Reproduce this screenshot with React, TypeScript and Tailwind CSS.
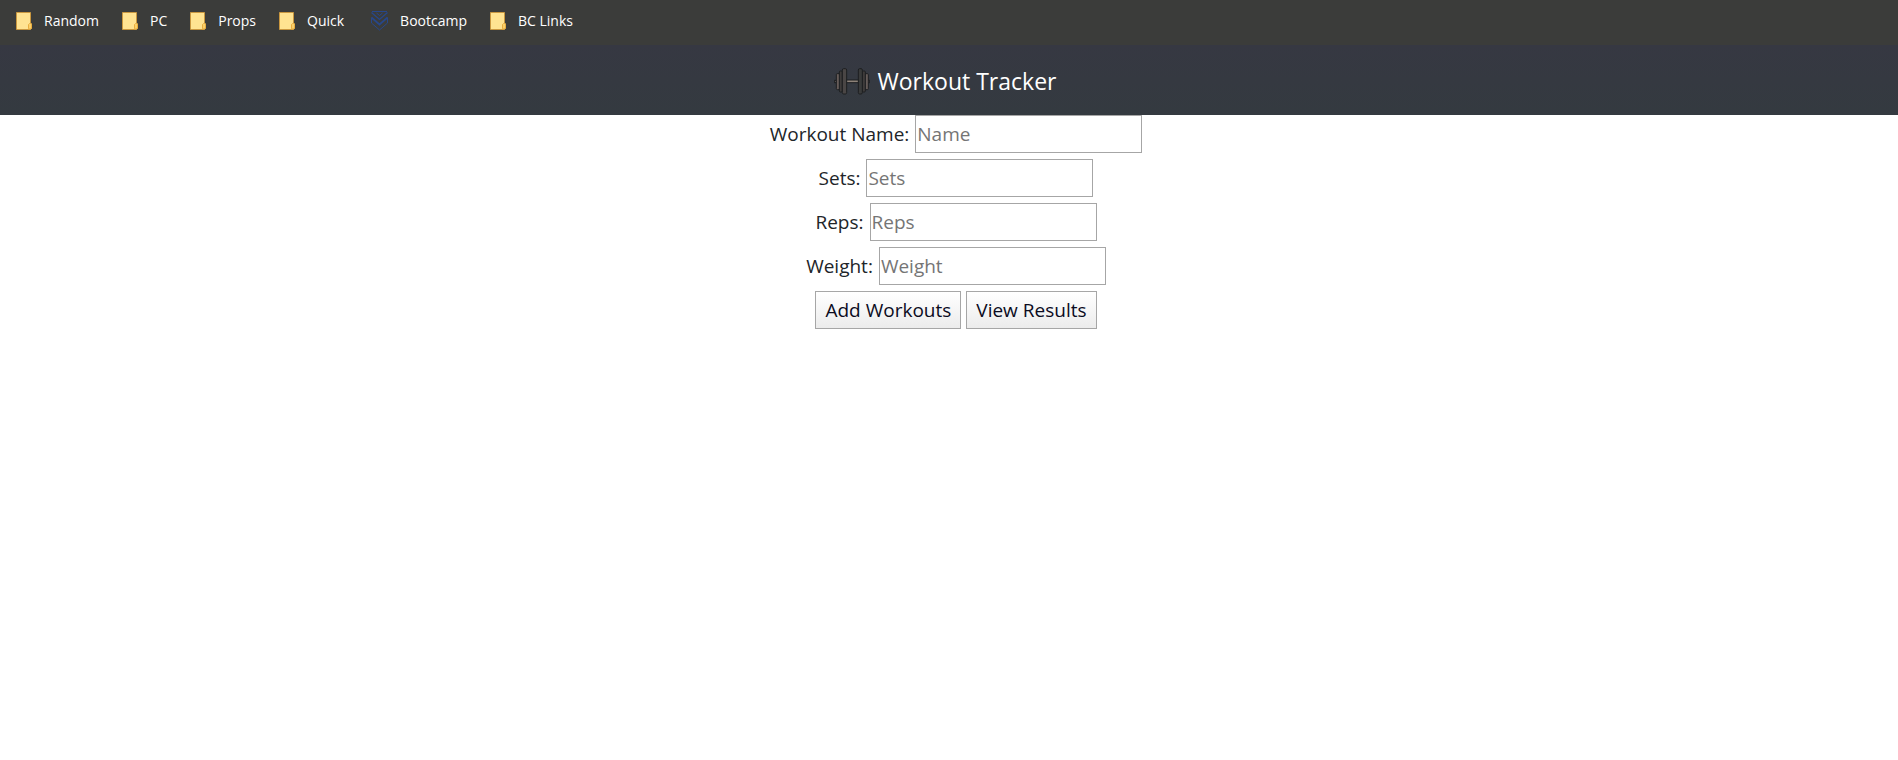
import React from "react";

function FolderIcon() {
  return (
    <svg width="16" height="18" viewBox="0 0 16 18" aria-hidden="true">
      <path d="M0.5 0.5H14.5V11.5H15.5V16.5L14.5 17.5H0.5Z" fill="#ffe391" stroke="#c9973f" />
      <path d="M12.5 16.5V12.5L13.5 11.5H14.5L15.5 12.5V16L14.5 17H12.5Z" fill="#fbd06a" stroke="#e9ae3e" />
    </svg>
  );
}

function ChevronsIcon() {
  return (
    <svg width="21" height="20" viewBox="0 0 21 20" fill="none" stroke="#27478a" aria-hidden="true">
      <path d="M5 0.500H20" />
      <path d="M9.500 2L12.500 4.500L15.500 2" />
      <path d="M4.500 1.500L12.500 8.500L20.500 1.500" strokeWidth="1.300" />
      <path d="M4.500 6.500L12.500 13.500L20.500 6.500" strokeWidth="1.700" />
      <path d="M4.500 6.500V12L12.500 19L20.500 12V6.500" />
    </svg>
  );
}

function DumbbellIcon() {
  return (
    <svg width="36" height="27" viewBox="0 0 108 81" stroke="#1d1f21" strokeWidth="3" aria-hidden="true">
      <rect x="2" y="37" width="6" height="7" fill="#6b625f" />
      <rect x="36" y="36" width="38" height="8" fill="#8d8279" />
      <rect x="7" y="17" width="11" height="48" rx="3" fill="#665c59" />
      <rect x="16" y="9" width="9" height="63" rx="3" fill="#3f3c3b" />
      <rect x="25" y="2" width="13" height="76" rx="4" fill="#4a4645" />
      <rect x="101" y="37" width="5" height="7" fill="#6b625f" />
      <rect x="93" y="17" width="10" height="48" rx="3" fill="#665c59" />
      <rect x="85" y="9" width="9" height="63" rx="3" fill="#3f3c3b" />
      <rect x="73" y="2" width="12" height="76" rx="4" fill="#3a3b3b" />
    </svg>
  );
}

const bookmarks = ["Random", "PC", "Props", "Quick", "Bootcamp", "BC Links"];

const fields = [
  { id: "name", label: "Workout Name:", placeholder: "Name" },
  { id: "sets", label: "Sets:", placeholder: "Sets" },
  { id: "reps", label: "Reps:", placeholder: "Reps" },
  { id: "weight", label: "Weight:", placeholder: "Weight" },
];

const buttonClass =
  "h-[38px] border border-[#a6a6a6] bg-linear-to-b from-white to-[#ececec] px-[9px] text-[19px] text-[#0b0b1e]";

export default function App() {
  return (
    <div className="min-h-screen bg-white font-['Open_Sans',sans-serif] text-[#212529]">
      <nav aria-label="Bookmarks" className="flex h-[45px] items-start gap-[23px] bg-[#3b3c3a] px-4 pt-[11px]">
        {bookmarks.map((name) => (
          <a key={name} href="#" className="flex h-5 items-center gap-3 text-[14px] text-white">
            {name === "Bootcamp" ? <ChevronsIcon /> : <FolderIcon />}
            <span className="pb-0.5">{name}</span>
          </a>
        ))}
      </nav>
      <header className="flex h-[70px] items-center justify-center gap-2 bg-[#343a40] bg-linear-to-b from-[#363842] to-[#343a40] pt-0.5 pr-2">
        <DumbbellIcon />
        <h1 className="text-[23px] text-white">Workout Tracker</h1>
      </header>
      <main className="flex flex-col items-center gap-1.5 pl-3.5">
        {fields.map((field) => (
          <div key={field.id} className="flex items-center gap-1.5">
            <label htmlFor={field.id} className="text-[19px]">
              {field.label}
            </label>
            <input
              id={field.id}
              type="text"
              placeholder={field.placeholder}
              className="h-[38px] w-[227px] border border-[#a6a6a6] bg-white px-px text-[19px] placeholder:text-[#757575]"
            />
          </div>
        ))}
        <div className="flex gap-[5px]">
          <button type="button" className={buttonClass}>Add Workouts</button>
          <button type="button" className={buttonClass}>View Results</button>
        </div>
      </main>
    </div>
  );
}
